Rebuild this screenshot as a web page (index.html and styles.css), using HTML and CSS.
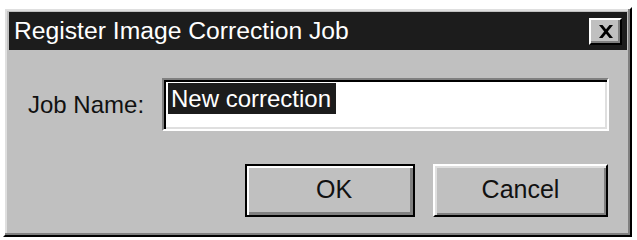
FILE: index.html
```html
<!DOCTYPE html>
<html>
<head>
<meta charset="utf-8">
<link rel="stylesheet" href="styles.css">
</head>
<body>
<div class="window">
  <div class="titlebar">
    <span class="title">Register Image Correction Job</span>
    <button class="close" aria-label="Close">
      <svg width="16" height="13" viewBox="0 0 16 13"><path d="M1 0h3.5l3.5 4.3L11.5 0H15L9.8 6.5 15 13h-3.5L8 8.7 4.5 13H1l5.2-6.5z" fill="#000"/></svg>
    </button>
  </div>
  <div class="client">
    <div class="row">
      <label class="label">Job Name:</label>
      <div class="edit"><span class="sel">New correction</span></div>
    </div>
    <div class="buttons">
      <button class="btn default">OK</button>
      <button class="btn cancel">Cancel</button>
    </div>
  </div>
</div>
</body>
</html>
```
FILE: styles.css
```css
html, body {
  margin: 0;
  padding: 0;
  background: #fff;
}
body {
  font-family: "Liberation Sans", Arial, sans-serif;
  font-size: 24px;
  color: #000;
}
.window {
  box-sizing: border-box;
  margin: 7px 0 0 3px;
  width: 629px;
  height: 230px;
  background: #c0c0c0;
  border: 2px solid;
  border-color: #fff #000 #000 #fff;
  box-shadow: inset -2px -2px #808080, inset 2px 2px #dfdfdf;
  padding: 3px 3px 0 4px;
  display: flex;
  flex-direction: column;
}
.titlebar {
  height: 38px;
  background: #1c1c1c;
  color: #fff;
  display: flex;
  align-items: center;
  justify-content: space-between;
  padding: 0 5px 0 5px;
}
.title {
  font-size: 24.7px;
  line-height: 38px;
  white-space: nowrap;
}
.close {
  box-sizing: border-box;
  width: 33px;
  height: 27px;
  padding: 0;
  margin: 0;
  background: #c0c0c0;
  border: 2px solid;
  border-color: #fff #000 #000 #fff;
  box-shadow: inset -2px -2px #808080;
  display: flex;
  align-items: center;
  justify-content: center;
}
.client {
  display: flex;
  flex-direction: column;
  padding: 28px 18px 0 19px;
}
.row {
  display: flex;
  align-items: center;
}
.label {
  width: 134px;
  flex: none;
  white-space: nowrap;
  color: #111;
}
.edit {
  box-sizing: border-box;
  flex: 1;
  height: 53px;
  background: #fff;
  border: 2px solid;
  border-color: #808080 #fff #fff #808080;
  box-shadow: inset 2px 2px #000, inset -2px -2px #dfdfdf;
  padding: 3px 4px;
}
.sel {
  display: inline-block;
  background: #1c1c1c;
  color: #fff;
  line-height: 31px;
  padding: 0 5px 0 3px;
  white-space: nowrap;
}
.buttons {
  display: flex;
  justify-content: flex-end;
  gap: 18px;
  margin-top: 33px;
  padding-right: 1px;
}
.btn {
  box-sizing: border-box;
  height: 53px;
  margin: 0;
  padding: 0 0 2px 0;
  background: #c0c0c0;
  font-family: "Liberation Sans", Arial, sans-serif;
  font-size: 25px;
  color: #111;
}
.default {
  width: 170px;
  border: 2px solid #000;
  box-shadow: inset 2px 2px #fff, inset -3px -3px #808080;
  padding-left: 8px;
}
.cancel {
  width: 175px;
  border: 2px solid;
  border-color: #fff #000 #000 #fff;
  box-shadow: inset 2px 2px #dfdfdf, inset -2px -2px #808080;
}
```
